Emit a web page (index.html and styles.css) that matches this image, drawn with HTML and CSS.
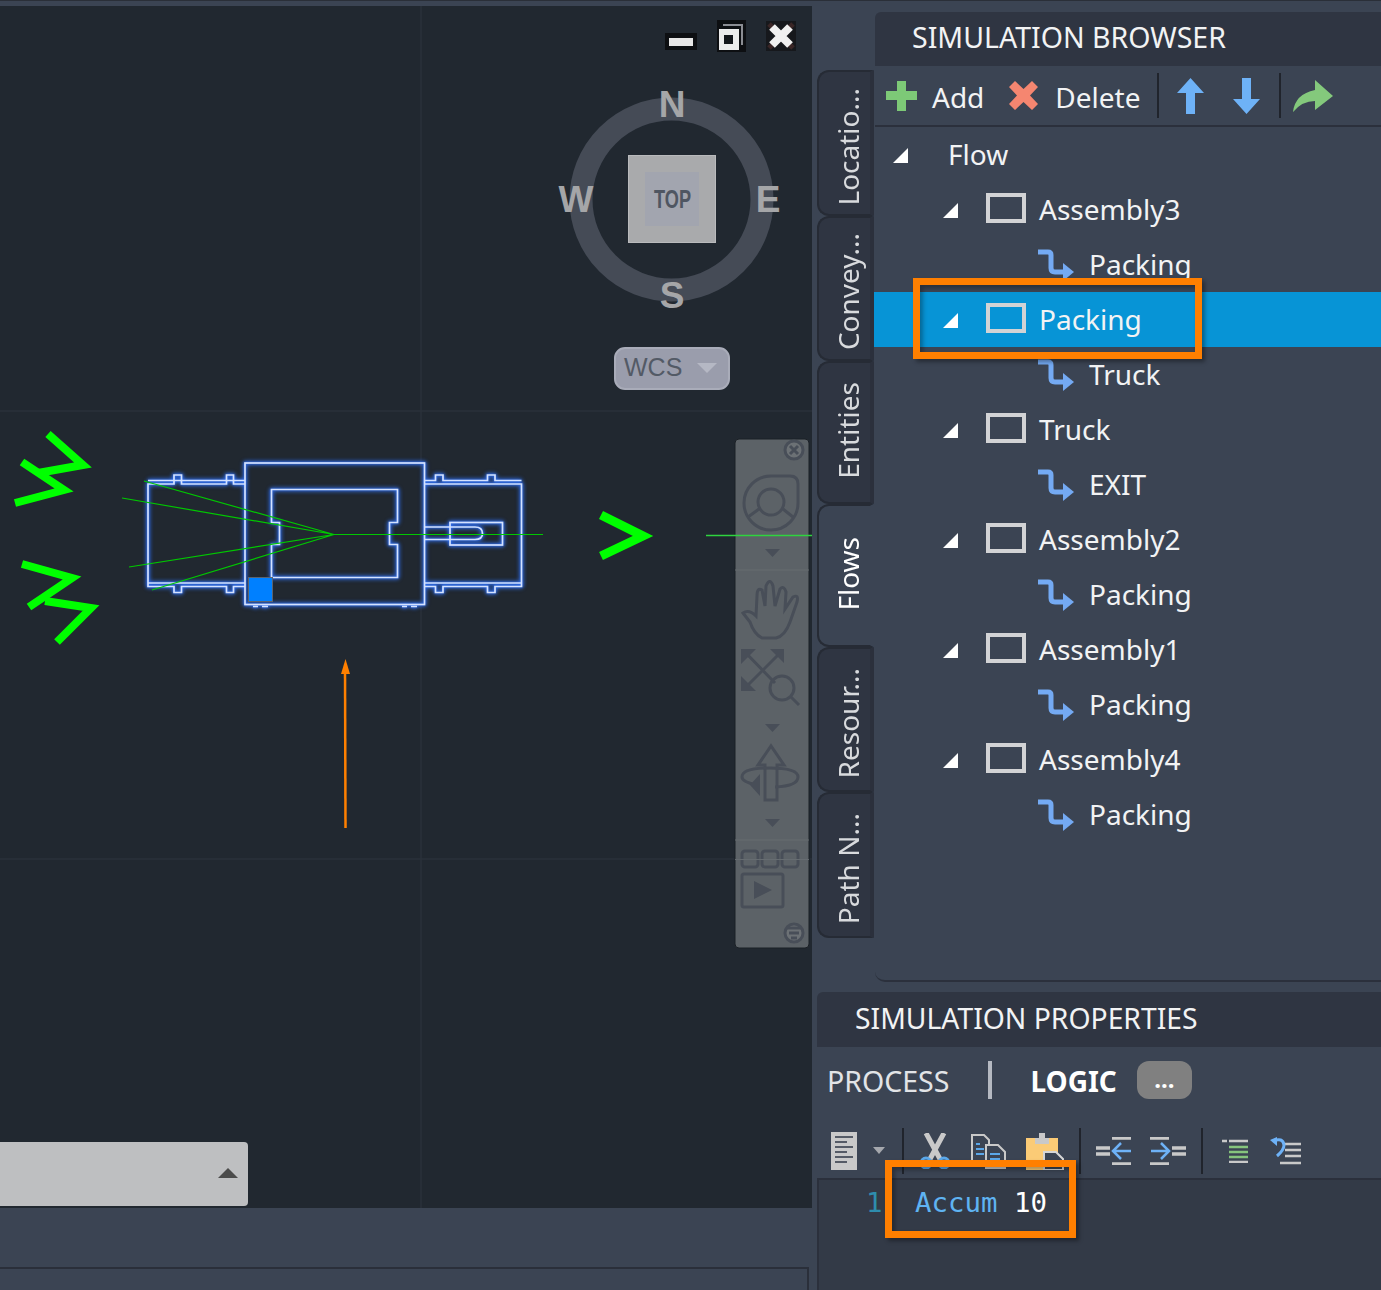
FILE: index.html
```html
<!DOCTYPE html>
<html lang="en">
<head>
<meta charset="utf-8">
<title>Simulation Browser</title>
<link rel="stylesheet" href="styles.css">
</head>
<body>
<svg class="defs" width="0" height="0" aria-hidden="true">
  <symbol id="route" viewBox="0 0 36 34">
    <path d="M0 4H10Q13 4 13 7V20Q13 24 17 24H28" fill="none" stroke="#74aaf3" stroke-width="5"/>
    <path d="M25 15L36 24L25 33Z" fill="#74aaf3"/>
  </symbol>
</svg>
<main class="app">
  <section class="left">
    <div class="viewport">
      <svg class="scene" viewBox="0 6 812 1202" width="812" height="1202">
        <path d="M0 411H812M0 859H812M421 6V1208" stroke="#2a313a" stroke-width="1.5" fill="none"/>

        <!-- window controls -->
        <rect x="665" y="33" width="32" height="17" fill="#0d0f12"/>
        <rect x="669" y="38" width="24" height="8" fill="#e6e6e6"/>
        <rect x="717" y="20" width="29" height="32" fill="#0d0f12"/>
        <path d="M723 25H742V45" fill="none" stroke="#8b8d93" stroke-width="2"/>
        <rect x="719" y="29" width="20" height="21" fill="#ececec"/>
        <rect x="724" y="35" width="9" height="9" fill="#14171b"/>
        <rect x="766" y="21" width="30" height="30" fill="#16181c"/>
        <path d="M769 24L793 48M793 24L769 48" stroke="#3a2626" stroke-width="5"/>
        <path d="M772 27L790 45M790 27L772 45" stroke="#f0f0f0" stroke-width="8"/>

        <!-- view cube -->
        <circle cx="671.5" cy="199.5" r="90.5" fill="none" stroke="#454b56" stroke-width="23"/>
        <rect x="628.5" y="155.5" width="87" height="87" fill="#a9aaac" stroke="#b9babc"/>
        <rect x="645" y="172" width="54" height="54" fill="#a2a5af"/>
        <text class="top-label" x="654" y="208" textLength="37" lengthAdjust="spacingAndGlyphs">TOP</text>
        <text class="compass" x="672" y="117">N</text>
        <text class="compass" x="576" y="212">W</text>
        <text class="compass" x="768" y="212">E</text>
        <text class="compass" x="672" y="308">S</text>
        <rect x="615" y="348" width="114" height="41" rx="10" fill="#9a9dac" stroke="#a9acb9" stroke-width="2"/>
        <text class="wcs" x="624" y="376">WCS</text>
        <path d="M697 363H717L707 373Z" fill="#b5b8c4"/>

        <!-- drawing -->
        <g class="walls">
          <rect x="245" y="463" width="179.500" height="141.500"/>
          <path d="M271.500 489.500H397.500V522.500H389.500V544.500H397.500V577.500H271.500V544.500H279.500V522.500H271.500Z"/>
          <path d="M245 484H233.500V480.500H226.500V484H181.500V480.500H174V484H148V586.500H174V592.500H181.500V586.500H226.500V592.500H233.500V586.500H245"/>
          <path d="M245 480.500H233.500V475H226.500V480.500H181.500V475H174V480.500H148M148 583H245"/>
          <path d="M424.500 484H521.500V586.500H495V592.500H487.500V586.500H443V592.500H435.500V586.500H424.500"/>
          <path d="M424.500 480.500H435.500V475H443V480.500H487.500V475H495V480.500H521.500M424.500 583H521.500"/>
          <path d="M424.500 527H475Q482.500 527 482.500 533.500Q482.500 539.500 475 539.500H424.500"/>
          <rect x="450" y="522.500" width="52.500" height="22.500"/>
          <path d="M253 606.500H258M262 606.500H268M402 606.500H407M411 606.500H417"/>
        </g>
        <rect x="248.500" y="577.500" width="24" height="24" fill="#0080ff" stroke="#5b6470"/>
        <g class="thin">
          <path d="M144 481L334 534.500L122 498M129 567L334 534.500L152 590M334 534.500H543"/>
        </g>
        <g class="chevrons">
          <path d="M48 434L83 465L38 473"/>
          <path d="M22 462L64 490L15 503"/>
          <path d="M22 564L72 578L29 607"/>
          <path d="M45 601L91 608L57 642"/>
          <path class="big" d="M601 515L643 536L601 556"/>
        </g>
        <path d="M345.500 828L345 668" stroke="#ff8000" stroke-width="2.500"/>
        <path d="M341 674L345.500 659L350 674Z" fill="#ff8000"/>

        <!-- navigation bar -->
        <rect class="nav-bg" x="735" y="439" width="74" height="509" rx="4"/>
        <g class="nav">
          <circle cx="794" cy="450" r="9" fill="#6c7175"/>
          <path d="M790 446L798 454M798 446L790 454" stroke-width="1.500"/>
          <path d="M771 476H790Q798 476 798 484V503A27 27 0 1 1 771 476Z"/>
          <circle cx="771" cy="502" r="13"/>
          <path d="M759 509L748 517M783 509L793 517"/>
          <path class="solid" d="M765 549H780L772.500 557Z"/>
          <path d="M743 613Q749 609 756 616L757 596Q757 587 762 590L765 606L766 586Q770 577 773 586L775 606L780 589Q784 585 786 592L785 609L793 597Q799 594 797 602L790 622Q785 636 776 638H762Q754 634 750 622Z"/>
          <path d="M743 650L775 683M783 650L743 690"/>
          <path class="solid" d="M741 649H756L741 664ZM784 649V663L770 649ZM741 691V676L756 691Z"/>
          <circle cx="782" cy="688" r="12"/>
          <path d="M791 697L799 705" stroke-width="6"/>
          <path class="solid" d="M765 724H780L772.500 732Z"/>
          <path d="M765 800V765H758L771 746L784 765H777V800Z"/>
          <path d="M757 785Q742 782 742 777Q742 768 770 768Q798 768 798 777Q798 786 775 787"/>
          <path class="solid" d="M750 785L760 774V796Z"/>
          <path class="solid" d="M765 819H780L772.500 827Z"/>
          <rect x="742" y="851" width="16" height="16" rx="3"/>
          <rect x="762" y="851" width="16" height="16" rx="3"/>
          <rect x="782" y="851" width="16" height="16" rx="3"/>
          <rect x="742" y="874" width="41" height="33" rx="2"/>
          <path class="solid" d="M754 881L772 890L754 899Z"/>
          <circle cx="794" cy="933" r="9" fill="#6c7175" stroke="none"/>
          <path d="M787 928H801M789 933H799M791 938H797"/>
        </g>
        <path d="M735 570H809M735 840H809" stroke="#666c71" stroke-width="1"/>
        <path d="M735 859.500H809" stroke="#666c71" stroke-width="1"/>
        <path class="thin-lit" d="M706 535.500H812"/>
      </svg>
      <div class="floating-bar"><span class="bar-caret"></span></div>
    </div>
    <div class="status"><div class="status-inner"></div></div>
  </section>

  <section class="right">
    <div class="browser">
      <nav class="tabs">
        <div class="tab tab-long"><span>Locatio...</span></div>
        <div class="tab tab-long"><span>Convey...</span></div>
        <div class="tab tab-short"><span>Entities</span></div>
        <div class="tab tab-short active"><span>Flows</span></div>
        <div class="tab tab-long"><span>Resour...</span></div>
        <div class="tab tab-long"><span>Path N...</span></div>
      </nav>
      <div class="panel">
        <h2 class="panel-title browser-title">SIMULATION BROWSER</h2>
        <div class="toolbar">
          <svg class="ic-plus" width="31" height="31" viewBox="0 0 31 31"><path d="M11 1H20V11H31V20H20V31H11V20H0V11H11Z" fill="#7dc977"/></svg>
          <span class="tool-label add-label">Add</span>
          <svg class="ic-x" width="31" height="31" viewBox="0 0 31 31"><path d="M7 1L15.500 9L24 1L30 7L22 15.500L30 24L24 30L15.500 22L7 30L1 24L9 15.500L1 7Z" fill="#f58670"/></svg>
          <span class="tool-label delete-label">Delete</span>
          <i class="sep sep-a"></i>
          <svg class="ic-up" width="27" height="36" viewBox="0 0 27 36"><path d="M13.500 0L27 15H18V36H9V15H0Z" fill="#6eb2f7"/></svg>
          <svg class="ic-down" width="27" height="36" viewBox="0 0 27 36"><path d="M9 0H18V21H27L13.500 36L0 21H9Z" fill="#6eb2f7"/></svg>
          <i class="sep sep-b"></i>
          <svg class="ic-share" width="40" height="32" viewBox="0 0 40 32"><path d="M0 32Q2 14 22 10V0L40 16L22 30V21Q9 21 0 32Z" fill="#84c97c"/></svg>
        </div>
        <ul class="tree">
          <li class="row l0"><i class="caret"></i><span>Flow</span></li>
          <li class="row l1"><i class="caret"></i><i class="box"></i><span>Assembly3</span></li>
          <li class="row l2"><svg class="route"><use href="#route"/></svg><span>Packing</span></li>
          <li class="row l1 selected"><i class="caret"></i><i class="box"></i><span>Packing</span></li>
          <li class="row l2"><svg class="route"><use href="#route"/></svg><span>Truck</span></li>
          <li class="row l1"><i class="caret"></i><i class="box"></i><span>Truck</span></li>
          <li class="row l2"><svg class="route"><use href="#route"/></svg><span>EXIT</span></li>
          <li class="row l1"><i class="caret"></i><i class="box"></i><span>Assembly2</span></li>
          <li class="row l2"><svg class="route"><use href="#route"/></svg><span>Packing</span></li>
          <li class="row l1"><i class="caret"></i><i class="box"></i><span>Assembly1</span></li>
          <li class="row l2"><svg class="route"><use href="#route"/></svg><span>Packing</span></li>
          <li class="row l1"><i class="caret"></i><i class="box"></i><span>Assembly4</span></li>
          <li class="row l2"><svg class="route"><use href="#route"/></svg><span>Packing</span></li>
        </ul>
      </div>
    </div>

    <div class="properties">
      <h2 class="panel-title props-title">SIMULATION PROPERTIES</h2>
      <div class="prop-tabs">
        <span class="prop-tab">PROCESS</span>
        <i class="prop-divider"></i>
        <span class="prop-tab strong">LOGIC</span>
        <span class="more">...</span>
      </div>
      <div class="edit-tools">
        <svg class="e-doc" width="26" height="38" viewBox="0 0 26 38"><rect width="26" height="38" fill="#c9c9c9"/><path d="M4 5H22M4 10H16M4 15H22M4 20H16M4 25H22M4 30H16" stroke="#555b66" stroke-width="2"/></svg>
        <i class="e-caret"></i>
        <i class="sep e-sep1"></i>
        <svg class="e-cut" width="32" height="36" viewBox="0 0 32 36"><path d="M7 0L21 26M25 0L11 26" stroke="#c9c9c9" stroke-width="5" fill="none"/><circle cx="7" cy="30" r="5" fill="none" stroke="#5ba8ea" stroke-width="3"/><circle cx="25" cy="30" r="5" fill="none" stroke="#5ba8ea" stroke-width="3"/></svg>
        <svg class="e-copy" width="36" height="36" viewBox="0 0 36 36"><path d="M2 2H14L19 7V30H2Z" fill="#3b4453" stroke="#c9c9c9" stroke-width="2"/><path d="M6 11H10M6 16H14M6 21H14" stroke="#5ba8ea" stroke-width="2"/><path d="M16 12H28L35 19V35H16Z" fill="#3b4453" stroke="#c9c9c9" stroke-width="2"/><path d="M20 21H30M20 26H30" stroke="#5ba8ea" stroke-width="2"/></svg>
        <svg class="e-paste" width="38" height="38" viewBox="0 0 38 38"><path d="M0 6H32V38H0Z" fill="#fbcb76"/><path d="M9 6H23V12H9Z M13 1H19V6H13Z" fill="#c9c9c9"/><path d="M18 20H30L37 27V38H18Z" fill="#3b4453" stroke="#d6d6d6" stroke-width="2"/></svg>
        <i class="sep e-sep2"></i>
        <svg class="e-out" width="36" height="28" viewBox="0 0 36 28"><path d="M16 1H35M0 11H14M0 17H14M16 27H35" stroke="#c9c9c9" stroke-width="3.500"/><path d="M35 14H18M25 6L17 14L25 22" fill="none" stroke="#6eb2f7" stroke-width="2.500"/></svg>
        <svg class="e-in" width="36" height="28" viewBox="0 0 36 28"><path d="M0 1H19M22 11H36M22 17H36M0 27H19" stroke="#c9c9c9" stroke-width="3.500"/><path d="M1 14H18M11 6L19 14L11 22" fill="none" stroke="#6eb2f7" stroke-width="2.500"/></svg>
        <i class="sep e-sep3"></i>
        <svg class="e-com" width="26" height="24" viewBox="0 0 26 24"><path d="M0 2H5M7 23H26M7 2H26" stroke="#c9c9c9" stroke-width="2.500"/><path d="M7 8H26M7 13H26M7 18H26" stroke="#86c47d" stroke-width="2.500"/></svg>
        <svg class="e-unc" width="32" height="28" viewBox="0 0 32 28"><path d="M15 7H31M15 13H31M15 19H31M10 26H31" stroke="#c9c9c9" stroke-width="2.500"/><path d="M3 4Q13 0 14 8Q14 13 7 19" fill="none" stroke="#6eb2f7" stroke-width="3"/><path d="M0 3L7 0V9Z" fill="#6eb2f7"/></svg>
      </div>
      <div class="editor">
        <span class="line-no">1</span>
        <code class="code"><span class="kw">Accum</span> 10</code>
      </div>
    </div>
  </section>
</main>
<div class="callout callout-tree"></div>
<div class="callout callout-code"></div>
</body>
</html>
```
FILE: styles.css
```css
* { box-sizing: border-box; }
html, body { margin: 0; padding: 0; }
body {
  position: relative;
  width: 1381px;
  height: 1290px;
  overflow: hidden;
  background: #3b4453;
  color: #f2f3f4;
  font-family: "Noto Sans", sans-serif;
  font-size: 28px;
}
.defs { position: absolute; }
.app {
  display: grid;
  grid-template-columns: 812px 569px;
  height: 1290px;
  border-top: 1px solid #2a2f38;
}

/* left: viewport */
.left { display: flex; flex-direction: column; padding-top: 5px; }
.viewport { position: relative; height: 1202px; background: #212830; overflow: hidden; }
.scene { display: block; }
.compass { font: bold 37px "Liberation Sans", sans-serif; fill: #a5a6a8; text-anchor: middle; }
.top-label { font: bold 25px "Liberation Sans", sans-serif; fill: #4f5662; }
.wcs { font: 25px "Liberation Sans", sans-serif; fill: #535a66; }
.walls { filter: drop-shadow(0 0 2px #2f73ff) drop-shadow(0 0 1px #2f73ff); }
.walls path, .walls rect { fill: none; stroke: #d4e2ff; stroke-width: 1.700; }
.thin path { fill: none; stroke: #00c800; stroke-width: 1.200; }
.thin-lit { stroke: #2fd43f; stroke-width: 1.300; fill: none; }
.chevrons path { fill: none; stroke: #00ff00; stroke-width: 8; stroke-miterlimit: 6; }
.chevrons path.big { stroke-width: 9; }
.nav-bg { fill: #5c6267; stroke: #1b2026; stroke-width: 1; }
.nav path, .nav rect, .nav circle { fill: none; stroke: #484e58; stroke-width: 3; }
.nav path.solid { fill: #484e58; stroke: none; }
.nav circle[fill] { fill: #6c7175; }
.floating-bar {
  position: absolute;
  left: -10px;
  top: 1136px;
  width: 258px;
  height: 64px;
  background: #bebfc1;
  border-radius: 4px;
}
.bar-caret {
  position: absolute;
  right: 10px;
  top: 26px;
  border-left: 10px solid transparent;
  border-right: 10px solid transparent;
  border-bottom: 10px solid #4b4b4b;
}
.status { flex: 1; padding-top: 59px; }
.status-inner { height: 30px; border-top: 2px solid #2a2f3a; border-right: 2px solid #2a2f3a; margin-right: 3px; }

/* right */
.right { display: flex; flex-direction: column; padding-top: 11px; }
.browser { display: flex; height: 970px; }
.tabs {
  display: flex;
  flex-direction: column;
  width: 57px;
  height: 868px;
  margin: 58px 0 0 5px;
  flex: none;
}
.tab {
  flex: 1;
  display: flex;
  align-items: center;
  justify-content: center;
  padding-left: 6px;
  background: #2f3542;
  border: 2px solid #262b35;
  border-right: 4px solid #2b303c;
  border-radius: 12px 0 0 12px;
}
.tab-long { padding-top: 7px; }
.tab-short { padding-bottom: 4px; }
.tab span {
  writing-mode: vertical-rl;
  transform: rotate(180deg);
  font-size: 28px;
  line-height: 1;
  color: #d8dadd;
  white-space: nowrap;
}
.tab.active { background: #3b4453; border-right-color: #3b4453; }
.tab.active span { color: #fff; }
.panel {
  flex: 1;
  min-width: 0;
  margin-left: 1px;
  display: flex;
  flex-direction: column;
  border-bottom: 2px solid #2b303c;
  border-radius: 0 0 0 10px;
}
.panel-title {
  margin: 0;
  height: 54px;
  background: #2f3542;
  font-weight: 400;
  font-size: 28.500px;
  line-height: 50px;
  color: #f2f3f4;
  border-radius: 6px 0 0 0;
  white-space: nowrap;
}
.browser-title { padding-left: 37px; }
.toolbar {
  display: flex;
  align-items: center;
  height: 61px;
  padding-left: 11px;
  border-bottom: 2px solid #2b303c;
}
.tool-label { line-height: 1; position: relative; top: 1px; }
.add-label { margin-left: 15px; }
.ic-x { margin-left: 24px; }
.delete-label { margin-left: 16px; }
.sep { display: block; width: 2px; background: #20242c; flex: none; }
.sep-a { height: 45px; margin-left: 16px; }
.ic-up { margin-left: 18px; }
.ic-down { margin-left: 29px; }
.sep-b { height: 45px; margin-left: 19px; }
.ic-share { margin-left: 12px; }

.tree { list-style: none; margin: 0; padding: 0; }
.row { display: flex; align-items: center; height: 55px; line-height: 1; white-space: nowrap; }
.row span { position: relative; top: -1px; }
.row.selected { background: #0794d6; margin-left: -1px; padding-left: 69px; }
.caret {
  display: block;
  width: 0;
  height: 0;
  flex: none;
  margin-top: 1px;
  border-left: 15px solid transparent;
  border-bottom: 15px solid #fff;
}
.box { display: block; width: 40px; height: 30px; flex: none; margin: -3px 13px 0 28px; border: 4px solid #d2d3d5; }
.l0 { padding-left: 18px; }
.l0 .caret { margin-right: 40px; }
.l1 { padding-left: 68px; }
.l2 { padding-left: 163px; }
.route { display: block; width: 36px; height: 34px; margin-right: 15px; flex: none; }

/* properties */
.properties { margin: 10px 0 0 5px; flex: 1; display: flex; flex-direction: column; }
.props-title { padding-left: 38px; height: 55px; font-size: 28.300px; line-height: 52px; }
.prop-tabs { display: flex; align-items: center; height: 66px; padding-left: 10px; }
.prop-tab { font-size: 28.500px; line-height: 1; color: #e2e4e7; position: relative; top: 1px; }
.prop-tab.strong { font-size: 28px; font-weight: 700; color: #fff; margin-left: 38px; }
.prop-divider { display: block; width: 4px; height: 38px; background: #b5b9c1; margin-left: 39px; }
.more {
  width: 55px;
  height: 38px;
  margin-left: 20px;
  border-radius: 12px;
  background: #808080;
  color: #fff;
  font-weight: 700;
  font-size: 24px;
  text-align: center;
  line-height: 36px;
}
.edit-tools {
  display: flex;
  align-items: center;
  height: 67px;
  padding: 10px 0 0 14px;
  border-bottom: 2px solid #2b303c;
}
.e-caret {
  display: block;
  margin-left: 16px;
  border-left: 6px solid transparent;
  border-right: 6px solid transparent;
  border-top: 7px solid #a5a8ad;
  align-self: center;
}
.e-sep1 { height: 46px; margin-left: 17px; }
.e-cut { margin-left: 15px; }
.e-copy { margin-left: 19px; }
.e-paste { margin-left: 20px; }
.e-sep2 { height: 46px; margin-left: 15px; }
.e-out { margin-left: 15px; }
.e-in { margin-left: 18px; }
.e-sep3 { height: 46px; margin-left: 15px; }
.e-com { margin-left: 19px; }
.e-unc { margin-left: 22px; }
.editor {
  position: relative;
  flex: 1;
  display: flex;
  background: #333a47;
  border-left: 2px solid #2b303c;
  padding-top: 3px;
  font-family: "DejaVu Sans Mono", monospace;
  font-size: 27.400px;
  line-height: 40px;
}
.line-no { margin-left: 47px; color: #2e8dae; width: 49px; }
.code { font: inherit; color: #fff; white-space: pre; }
.kw { color: #5fb3f2; }

/* annotations */
.callout {
  position: absolute;
  border: 7px solid #ff7f00;
  box-shadow: 3px 3px 4px rgba(0, 0, 0, .35), inset 3px 3px 4px rgba(0, 0, 0, .3);
}
.callout-tree { left: 913px; top: 278px; width: 289px; height: 81px; }
.callout-code { left: 885px; top: 1160px; width: 191px; height: 78px; }
```
